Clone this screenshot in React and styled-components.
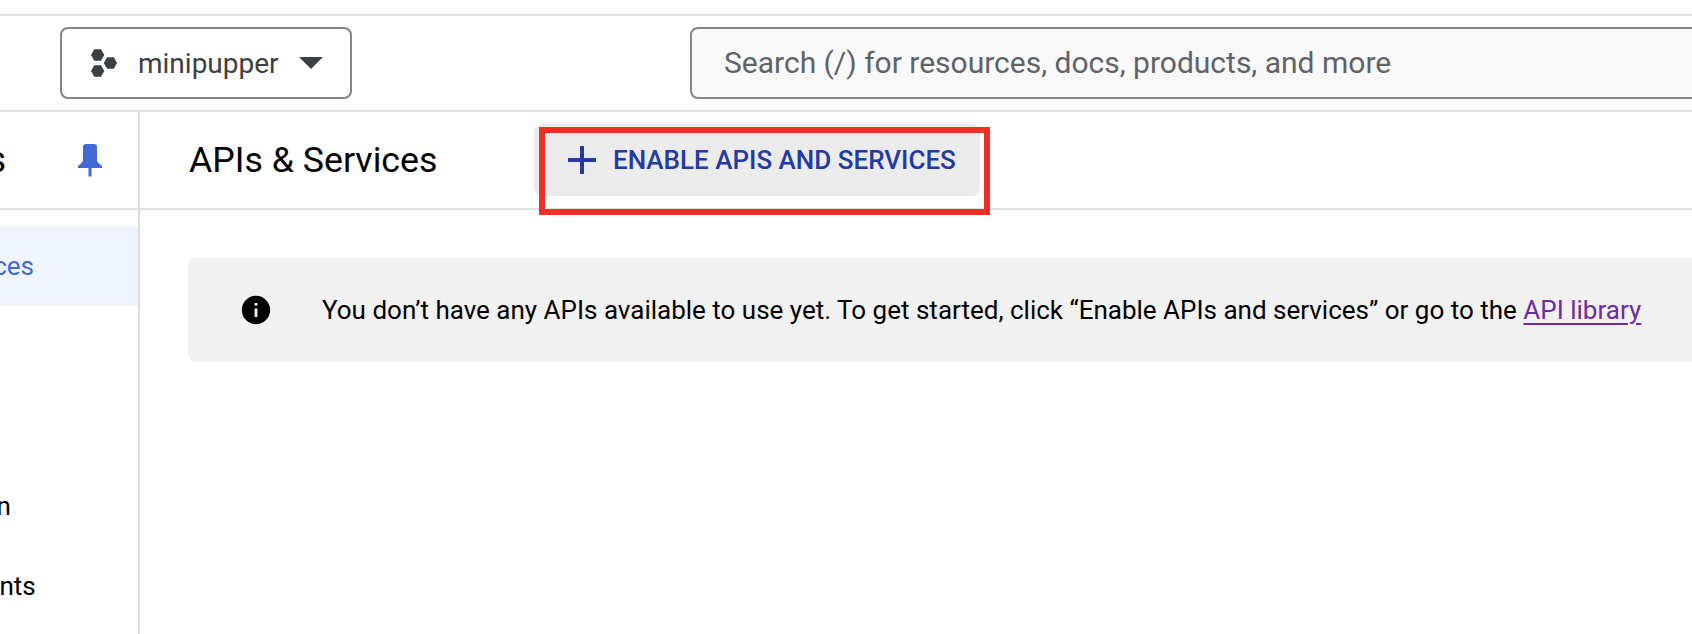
import React from "react";
import styled, { createGlobalStyle } from "styled-components";

const GlobalStyle = createGlobalStyle`
  html, body {
    margin: 0;
    padding: 0;
    background: #fff;
    overflow: hidden;
  }
  * {
    box-sizing: border-box;
  }
`;

const Page = styled.div`
  width: 1692px;
  height: 634px;
  overflow: hidden;
  display: flex;
  flex-direction: column;
  font-family: Roboto, "Liberation Sans", sans-serif;
  color: #000;
`;

const TopStrip = styled.div`
  height: 16px;
  flex: none;
  border-bottom: 2px solid #e0e0e0;
`;

const Header = styled.header`
  height: 96px;
  flex: none;
  display: flex;
  align-items: center;
  padding-left: 60px;
  border-bottom: 2px solid #e0e0e0;
`;

const ProjectButton = styled.button`
  width: 292px;
  height: 72px;
  flex: none;
  display: flex;
  align-items: center;
  padding: 0 0 0 29px;
  background: #fff;
  border: 2px solid #80868b;
  border-radius: 8px;
  font: inherit;
  font-size: 28px;
  color: #3c4043;
`;

const ProjectName = styled.span`
  margin-left: 21px;
`;

const Caret = styled.span`
  width: 0;
  height: 0;
  margin-left: 20px;
  border-left: 12px solid transparent;
  border-right: 12px solid transparent;
  border-top: 12px solid #3c4043;
`;

const SearchBox = styled.div`
  margin-left: 338px;
  flex: none;
  width: 1100px;
  height: 72px;
  display: flex;
  align-items: center;
  padding: 0 0 2px 32px;
  background: #f9f9f9;
  border: 2px solid #80868b;
  border-radius: 8px 0 0 8px;
  font-size: 30px;
  color: #5f6368;
`;

const Body = styled.div`
  flex: 1;
  display: flex;
  min-height: 0;
`;

const Sidebar = styled.nav`
  width: 140px;
  flex: none;
  overflow: hidden;
  border-right: 2px solid #dadce0;
`;

const SidebarHead = styled.div`
  height: 98px;
  display: flex;
  align-items: center;
  justify-content: flex-end;
  padding-right: 36px;
  border-bottom: 2px solid #e0e0e0;
  font-size: 36px;
  white-space: nowrap;
`;

const SidebarTitle = styled.span`
  flex: none;
  margin-right: 72px;
`;

const PinSvg = styled.svg`
  width: 24px;
  height: 33px;
  flex: none;
`;

const NavList = styled.div`
  margin-top: 16px;
  margin-left: -244px;
  width: 382px;
`;

const NavItem = styled.div`
  height: 80px;
  display: flex;
  align-items: center;
  font-size: 26px;
  white-space: nowrap;
  color: ${(p) => (p.$active ? "#4169d8" : "#000")};
  background: ${(p) => (p.$active ? "#f0f4fe" : "transparent")};
`;

const Main = styled.main`
  flex: 1;
  min-width: 0;
`;

const Toolbar = styled.div`
  height: 98px;
  display: flex;
  align-items: center;
  padding-left: 49px;
  border-bottom: 2px solid #e0e0e0;
`;

const Title = styled.h1`
  margin: 0;
  width: 345px;
  flex: none;
  font-size: 35.7px;
  font-weight: 400;
  white-space: nowrap;
`;

const ActionWrap = styled.div`
  position: relative;
  flex: none;
`;

const ActionButton = styled.button`
  width: 446px;
  height: 72px;
  display: flex;
  align-items: center;
  padding: 0 0 0 34px;
  border: none;
  border-radius: 8px;
  background: #ebebeb;
  font: inherit;
  font-size: 26px;
  font-weight: 500;
  color: #2438a6;
`;

const ActionLabel = styled.span`
  margin-left: 17px;
  white-space: nowrap;
`;

const RedOutline = styled.div`
  position: absolute;
  left: 5px;
  top: 3px;
  width: 451px;
  height: 88px;
  border: 6px solid #ee3124;
  pointer-events: none;
`;

const Banner = styled.div`
  margin: 48px 0 0 48px;
  height: 104px;
  display: flex;
  align-items: center;
  padding-left: 51px;
  background: #f1f1f1;
  border-radius: 8px 0 0 8px;
  font-size: 26px;
  white-space: nowrap;
`;

const InfoIcon = styled.svg`
  width: 34px;
  height: 34px;
  flex: none;
  margin-right: 49px;
`;

const LibraryLink = styled.a`
  color: #6f2aa3;
  text-decoration: underline;
  text-decoration-thickness: 2px;
  text-underline-offset: 4px;
`;

const HexIcon = () => (
  <svg width="26" height="28" viewBox="0 0 26 28" fill="#3c4043">
    <polygon points="0,6 3.3,0.2 10,0.2 13.3,6 10,11.8 3.3,11.8" />
    <polygon points="0,22 3.3,16.2 10,16.2 13.3,22 10,27.8 3.3,27.8" />
    <polygon points="12.8,14 16.1,8.2 22.8,8.2 26,14 22.8,19.8 16.1,19.8" />
  </svg>
);

const PinIcon = () => (
  <PinSvg viewBox="0 0 24 33" fill="#4169d8">
    <path d="M8 0h8a3 3 0 0 1 3 3v13c0 1 .6 2 1.5 3L24 22v2H13.5v8.5h-3V24H0v-2l3.5-3c.9-1 1.5-2 1.5-3V3a3 3 0 0 1 3-3z" />
  </PinSvg>
);

const PlusIcon = () => (
  <svg width="28" height="28" viewBox="5 5 14 14" fill="#2438a6">
    <path d="M19 13h-6v6h-2v-6H5v-2h6V5h2v6h6v2z" />
  </svg>
);

export default function App() {
  return (
    <Page>
      <GlobalStyle />
      <TopStrip />
      <Header>
        <ProjectButton>
          <HexIcon />
          <ProjectName>minipupper</ProjectName>
          <Caret />
        </ProjectButton>
        <SearchBox>Search (/) for resources, docs, products, and more</SearchBox>
      </Header>
      <Body>
        <Sidebar>
          <SidebarHead>
            <SidebarTitle>APIs &amp; Services</SidebarTitle>
            <PinIcon />
          </SidebarHead>
          <NavList>
            <NavItem $active>Enabled APIs &amp; services</NavItem>
            <NavItem>Library</NavItem>
            <NavItem>Credentials</NavItem>
            <NavItem>OAuth consent screen</NavItem>
            <NavItem>Page usage agreements</NavItem>
          </NavList>
        </Sidebar>
        <Main>
          <Toolbar>
            <Title>APIs &amp; Services</Title>
            <ActionWrap>
              <ActionButton>
                <PlusIcon />
                <ActionLabel>ENABLE APIS AND SERVICES</ActionLabel>
              </ActionButton>
              <RedOutline />
            </ActionWrap>
          </Toolbar>
          <Banner>
            <InfoIcon viewBox="0 0 24 24" fill="#000">
              <path d="M12 2C6.48 2 2 6.48 2 12s4.48 10 10 10 10-4.48 10-10S17.52 2 12 2zm1 15h-2v-6h2v6zm0-8h-2V7h2v2z" />
            </InfoIcon>
            <span>
              You don’t have any APIs available to use yet. To get started, click “Enable APIs and services” or go to the{" "}
              <LibraryLink href="#">API library</LibraryLink>
            </span>
          </Banner>
        </Main>
      </Body>
    </Page>
  );
}
